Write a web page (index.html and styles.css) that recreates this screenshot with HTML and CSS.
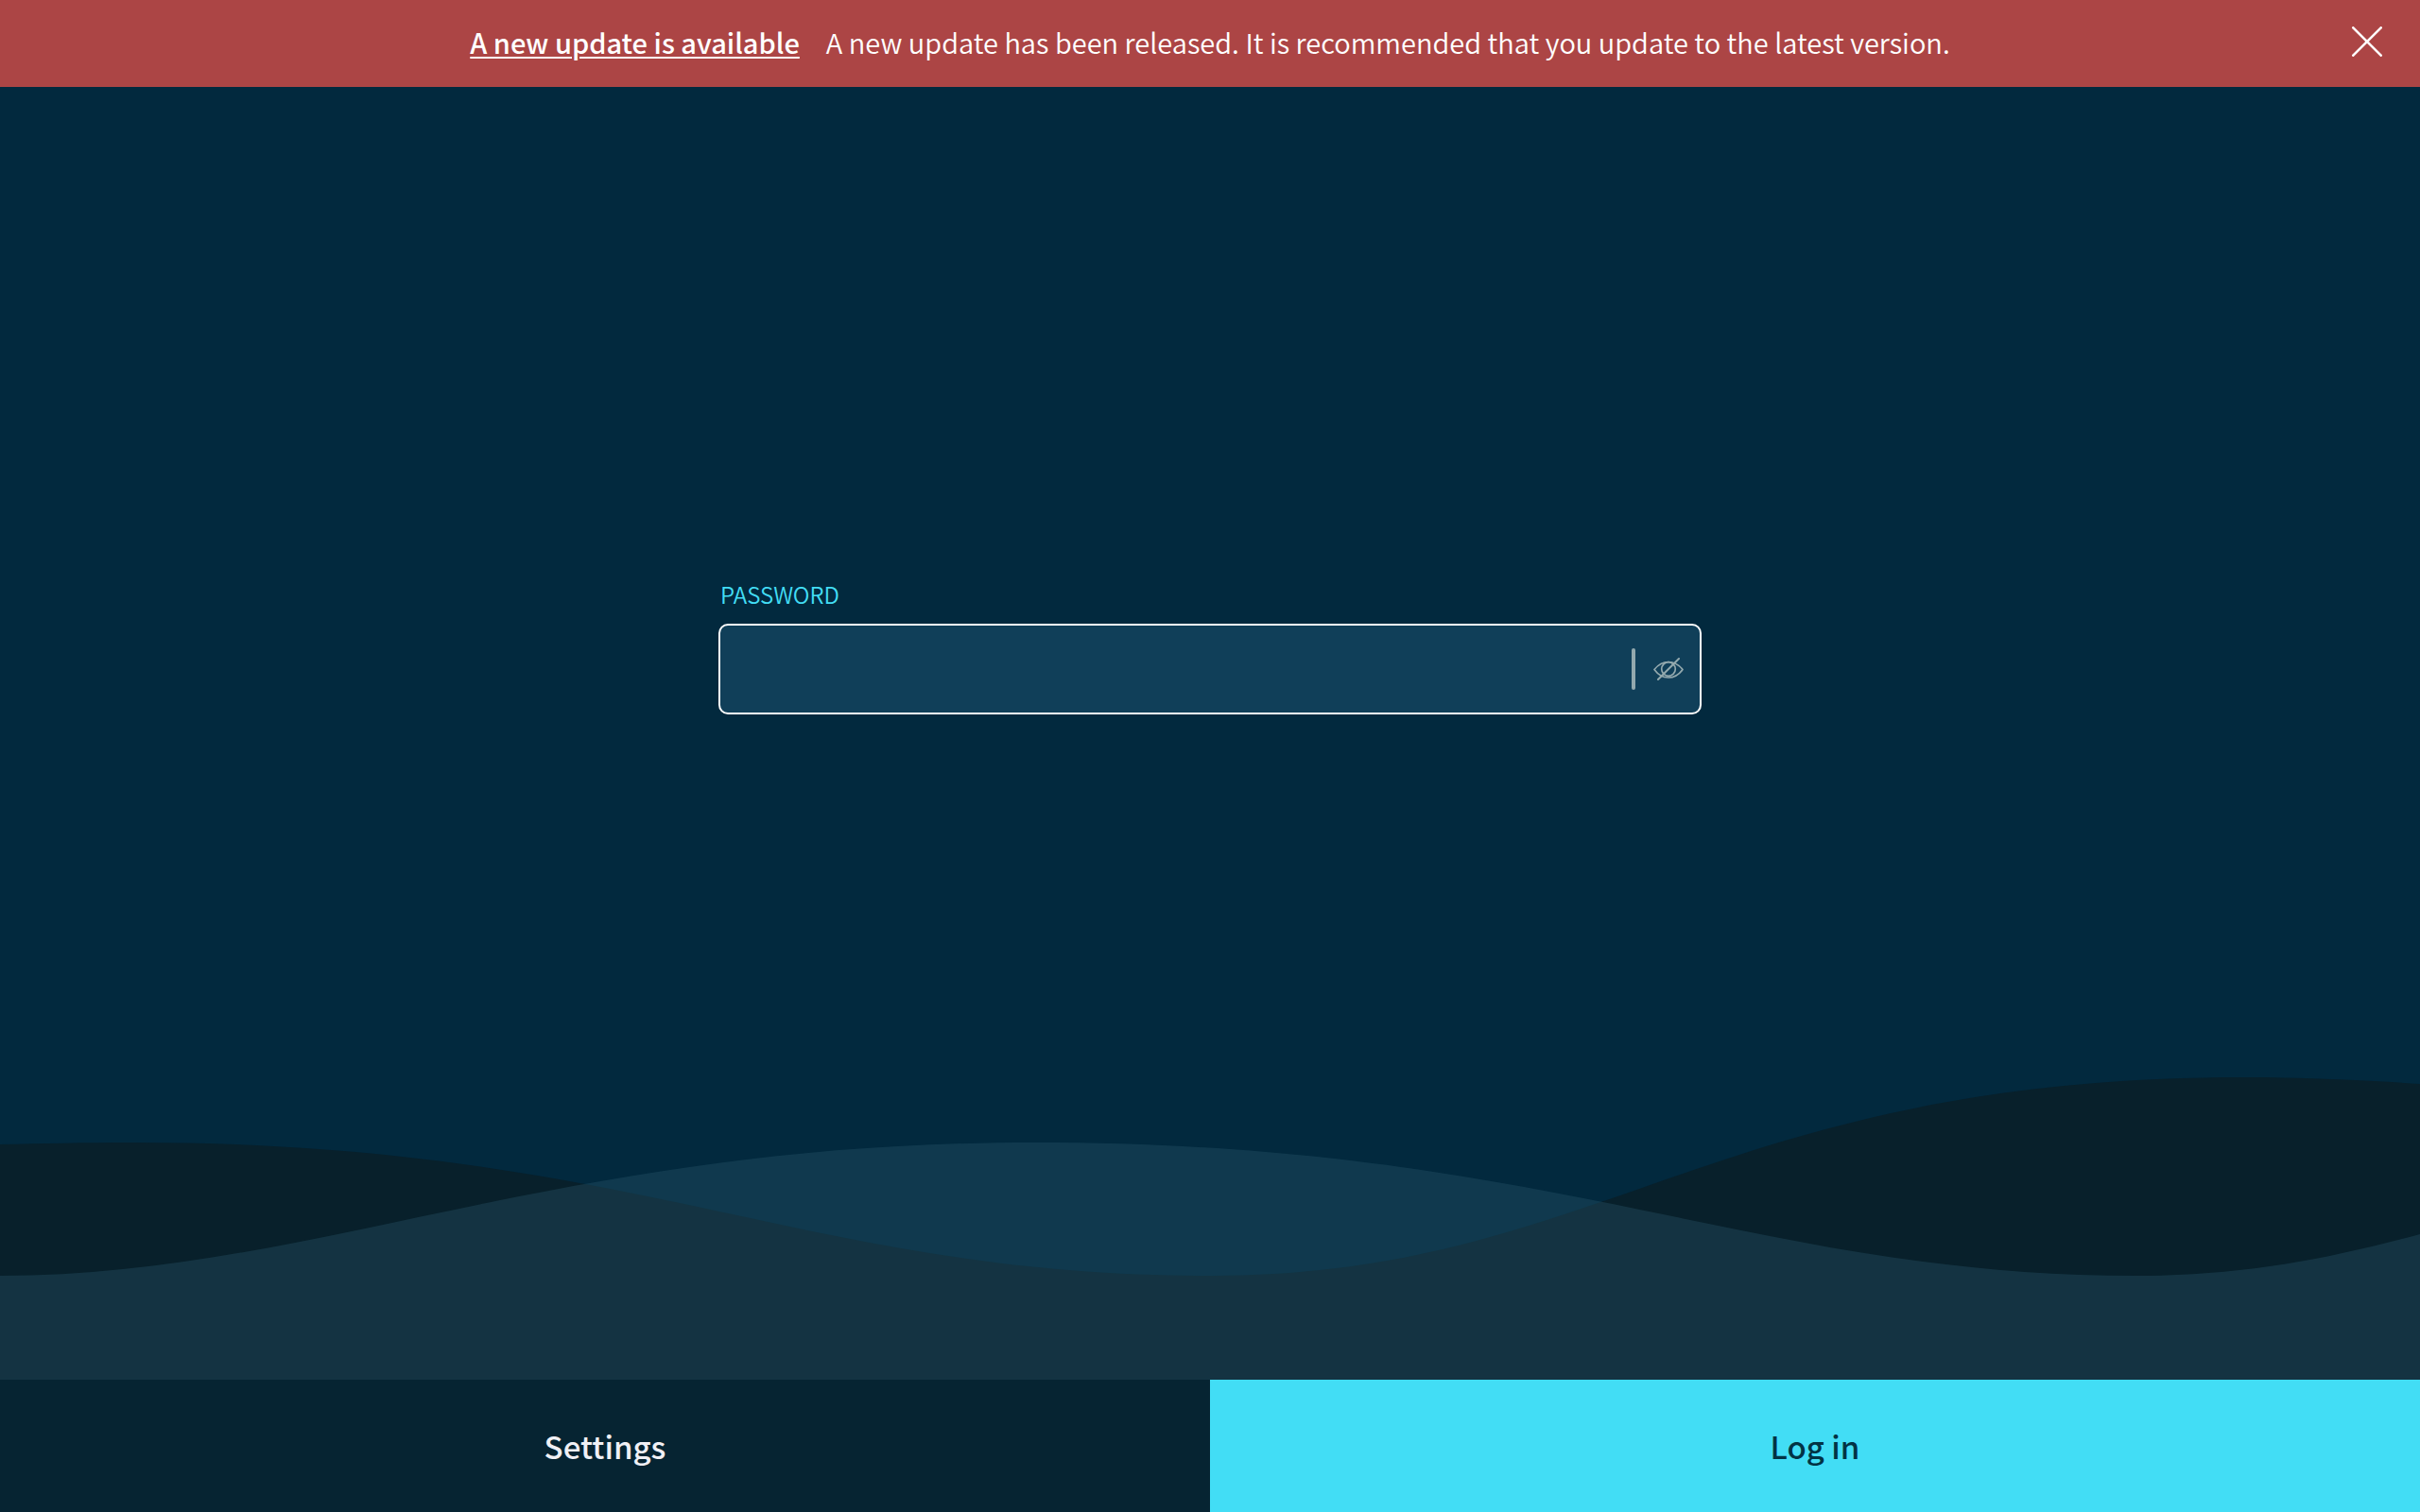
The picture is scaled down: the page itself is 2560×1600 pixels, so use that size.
FILE: index.html
```html
<!DOCTYPE html>
<html lang="en">
<head>
<meta charset="utf-8">
<meta name="viewport" content="width=device-width, initial-scale=1">
<title>Log in</title>
<link rel="stylesheet" href="styles.css">
</head>
<body>
<div class="app">
  <header class="banner">
    <p class="banner-text">
      <a class="banner-link" href="#update">A new update is available</a>
      <span>A new update has been released. It is recommended that you update to the latest version.</span>
    </p>
    <button class="banner-close" type="button" aria-label="Dismiss">
      <svg width="32" height="32" viewBox="0 0 32 32" fill="none" stroke="#fff" stroke-width="2.6" stroke-linecap="round"><path d="M1.3 1.3l29.4 29.4M30.7 1.3L1.3 30.7"/></svg>
    </button>
  </header>
  <main class="main">
    <svg class="waves" viewBox="0 0 2560 320" preserveAspectRatio="none" aria-hidden="true">
      <path fill="#08202b" d="M0 71C45 70 90 69 140 69C675 69 850 210 1280 210C1692 210 1813 0 2374 0C2440 0 2500 3 2560 7V320H0Z"/>
      <path fill="#2b586c" fill-opacity=".35" d="M0 210C333 210 590 69 1094 69C1646 69 1856 210 2260 210C2370 210 2460 193 2560 166V320H0Z"/>
    </svg>
    <form class="login" id="login">
      <label class="label" for="password">PASSWORD</label>
      <div class="field">
        <input class="input" id="password" type="password">
        <span class="divider"></span>
        <button class="toggle" type="button" aria-label="Show password">
          <svg width="32" height="24" viewBox="0 0 32 24" fill="none" stroke="#93a9ae" stroke-width="1.7" stroke-linecap="round" stroke-linejoin="round"><path d="M1 12.5C5 7.500 10 4.500 16 4.500S27 7.500 31 12.500C27 18 22 21 16 21S5 18 1 12.500Z"/><ellipse cx="16" cy="12" rx="7.300" ry="7.300"/><path d="M27 1L5 23" stroke-width="2"/></svg>
        </button>
      </div>
    </form>
  </main>
  <footer class="actions">
    <button class="action settings" type="button">Settings</button>
    <button class="action submit" type="submit" form="login">Log in</button>
  </footer>
</div>
</body>
</html>
```
FILE: styles.css
```css
* { box-sizing: border-box; }

body {
  margin: 0;
  background: #02293e;
  color: #fff;
  font-family: "Noto Sans CJK SC", "Noto Sans", sans-serif;
}

button {
  margin: 0;
  padding: 0;
  border: 0;
  background: none;
  color: inherit;
  font: inherit;
  cursor: pointer;
}

svg { display: block; }

.app {
  display: flex;
  flex-direction: column;
  min-height: 100vh;
}

.banner {
  display: grid;
  grid-template-columns: 1fr auto 1fr;
  align-items: center;
  min-height: 92px;
  padding: 0 40px 4px;
  background: #ac4545;
}

.banner-text {
  display: flex;
  grid-column: 2;
  gap: 28px;
  margin: 0;
  font-size: 29px;
  font-weight: 350;
  line-height: 40px;
}

.banner-link {
  color: inherit;
  font-weight: 500;
  text-decoration-thickness: 2px;
  text-underline-offset: 3px;
}

.banner-close {
  justify-self: end;
}

.main {
  display: grid;
  flex: 1;
}

.waves {
  grid-area: 1 / 1;
  align-self: end;
  width: 100%;
  height: 320px;
}

.login {
  grid-area: 1 / 1;
  place-self: center;
  width: 100%;
  max-width: 1040px;
  padding-bottom: 184px;
}

.label {
  display: block;
  margin-bottom: 14px;
  padding-left: 2px;
  color: #42ddf5;
  font-size: 24px;
  font-weight: 350;
  line-height: 34px;
}

.field {
  display: flex;
  align-items: center;
  height: 96px;
  padding-right: 17px;
  border: 2px solid #fff;
  border-radius: 10px;
  background: #103f59;
}

.input {
  flex: 1;
  min-width: 0;
  height: 100%;
  padding: 0 24px;
  border: 0;
  outline: 0;
  background: transparent;
  color: #fff;
  font: inherit;
  font-size: 29px;
}

.divider {
  width: 4px;
  height: 44px;
  margin-right: 19px;
  border-radius: 2px;
  background: #93a9ae;
}

.actions {
  display: grid;
  grid-template-columns: 1fr 1fr;
}

.action {
  height: 140px;
  font-size: 33px;
  font-weight: 500;
  line-height: 48px;
}

.settings {
  background: #062432;
  color: #f0f0f5;
}

.submit {
  background: #42ddf5;
  color: #023344;
}
```
